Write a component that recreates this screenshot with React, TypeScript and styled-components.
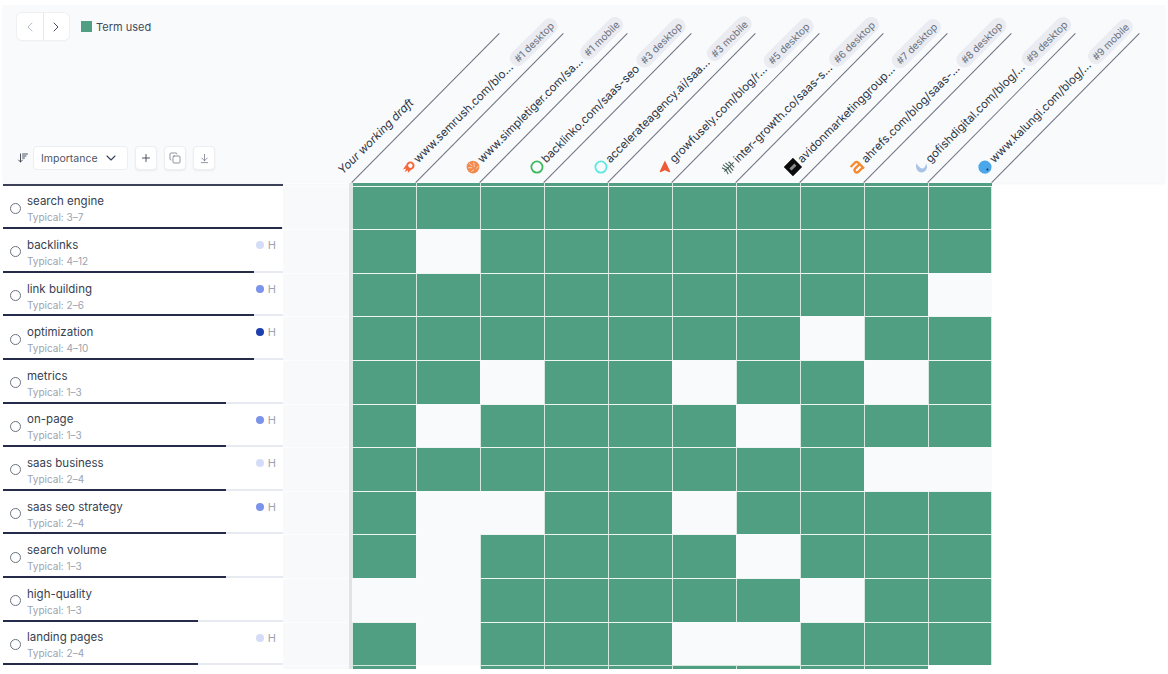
import { createGlobalStyle } from "styled-components";
import styled from "styled-components";
import { ArrowDownToLine, ArrowDownWideNarrow, ChevronDown, ChevronLeft, ChevronRight, Copy, Plus } from "lucide-react";

const GREEN = "#519f82";
const PANEL = "#f9fafc";

const GlobalStyle = createGlobalStyle`
    html, body {
        margin: 0;
        background: #fff;
        font-family: Inter, "Liberation Sans", sans-serif;
    }
`

const SemrushIcon = () => (
    <svg width="14" height="14" viewBox="0 0 14 14">
        <circle cx="9" cy="7" r="3.2" fill="none" stroke="#f4683c" strokeWidth="2" />
        <path d="M6 3.5 L1 4.5 L4 6 L0.5 7.5 L4 8.5 L2 10.5 L7 10.5 Z" fill="#f4683c" />
    </svg>
)

const TigerIcon = () => (
    <svg width="14" height="14" viewBox="0 0 14 14">
        <circle cx="7" cy="7" r="6.4" fill="#f28a50" />
        <path d="M7 1.5 V6 M3 4 L6 7 M11 4 L8 8 M2.5 9 L6 9.5 M11.5 10 L8 10.5" stroke="#fbd3b8" strokeWidth="0.9" fill="none" />
    </svg>
)

const RingIcon = ({ color }: { color: string }) => (
    <svg width="14" height="14" viewBox="0 0 14 14">
        <circle cx="7" cy="7" r="5.6" fill="none" stroke={color} strokeWidth="1.8" />
    </svg>
)

const ArrowIcon = () => (
    <svg width="14" height="14" viewBox="0 0 14 14">
        <path d="M13.5 7 L1 1 L3.8 7 L1 13 Z" fill="#ee5a36" transform="rotate(-45 7 7)" />
    </svg>
)

const LeafIcon = () => (
    <svg width="14" height="14" viewBox="0 0 14 14">
        <g fill="none" stroke="#47615c" strokeWidth="1.1">
            <path d="M0.5 7 H13.5" />
            <path d="M3 7 Q2 4.5 1.5 2.5 M5.5 7 Q4.5 4 4.5 1 M8 7 Q7.5 4 7.5 1.5 M10.5 7 Q10.5 5 10.5 3" />
            <path d="M3 7 Q2 9.5 1.5 11.5 M5.5 7 Q4.5 10 4.5 13 M8 7 Q7.5 10 7.5 12.5 M10.5 7 Q10.5 9 10.5 11" />
        </g>
    </svg>
)

const AvidonIcon = () => (
    <svg width="14" height="14" viewBox="0 0 14 14">
        <rect x="0.5" y="0.5" width="13" height="13" fill="#0b0b0b" />
        <rect x="3.5" y="5.5" width="7" height="3" fill="#8a8a8a" />
    </svg>
)

const AhrefsIcon = () => (
    <svg width="14" height="14" viewBox="0 0 14 14">
        <g fill="none" stroke="#f58a2e" strokeWidth="2.3">
            <path d="M2.5 2.5 H8.5 Q11 2.5 11 5 V13" />
            <path d="M11 6.8 H5.2 Q2.4 6.8 2.4 9.2 Q2.4 11.4 5.2 11.4 H11" />
        </g>
    </svg>
)

const FishIcon = () => (
    <svg width="14" height="14" viewBox="0 0 14 14">
        <path d="M6.5 1 Q2 4 2 8 Q3 13 8 12.8 Q12.5 12 13 8 Q10.5 10.5 7.5 9.5 Q5 8 6.5 1 Z" fill="#a9c3e6" />
    </svg>
)

const KalungiIcon = () => (
    <svg width="14" height="14" viewBox="0 0 14 14">
        <circle cx="7" cy="7" r="6.6" fill="#4aa8ea" />
        <circle cx="7" cy="10.5" r="1.1" fill="#1b3f78" />
    </svg>
)

interface Source {
    url: string;
    rank: string;
    icon: React.ReactNode;
}

const sources: Source[] = [
    { url: "www.semrush.com/blo...", rank: "#1 desktop", icon: <SemrushIcon /> },
    { url: "www.simpletiger.com/sa...", rank: "#1 mobile", icon: <TigerIcon /> },
    { url: "backlinko.com/saas-seo", rank: "#3 desktop", icon: <RingIcon color="#3dba5f" /> },
    { url: "accelerateagency.ai/saa...", rank: "#3 mobile", icon: <RingIcon color="#5ce8e4" /> },
    { url: "growfusely.com/blog/r...", rank: "#5 desktop", icon: <ArrowIcon /> },
    { url: "inter-growth.co/saas-s...", rank: "#6 desktop", icon: <LeafIcon /> },
    { url: "avidonmarketinggroup...", rank: "#7 desktop", icon: <AvidonIcon /> },
    { url: "ahrefs.com/blog/saas-...", rank: "#8 desktop", icon: <AhrefsIcon /> },
    { url: "gofishdigital.com/blog/...", rank: "#9 desktop", icon: <FishIcon /> },
    { url: "www.kalungi.com/blog/...", rank: "#9 mobile", icon: <KalungiIcon /> },
]

type Level = "low" | "mid" | "high";

interface Term {
    name: string;
    typical: string;
    level?: Level;
    meter: number;
    missing: number[];
}

// missing = the columns (1-10) where the term is not used
const terms: Term[] = [
    { name: "search engine", typical: "3–7", meter: 279, missing: [] },
    { name: "backlinks", typical: "4–12", level: "low", meter: 251, missing: [2] },
    { name: "link building", typical: "2–6", level: "mid", meter: 251, missing: [10] },
    { name: "optimization", typical: "4–10", level: "high", meter: 251, missing: [8] },
    { name: "metrics", typical: "1–3", meter: 223, missing: [3, 6, 9] },
    { name: "on-page", typical: "1–3", level: "mid", meter: 223, missing: [2, 7] },
    { name: "saas business", typical: "2–4", level: "low", meter: 223, missing: [9, 10] },
    { name: "saas seo strategy", typical: "2–4", level: "mid", meter: 223, missing: [2, 3, 6] },
    { name: "search volume", typical: "1–3", meter: 223, missing: [2, 7] },
    { name: "high-quality", typical: "1–3", meter: 195, missing: [1, 2, 8] },
    { name: "landing pages", typical: "2–4", level: "low", meter: 195, missing: [2, 6, 7] },
]

const columns = [1, 2, 3, 4, 5, 6, 7, 8, 9, 10];

const App = () => {
    return (
        <Page>
            <GlobalStyle />
            <Header>
                <Tools>
                    <TopTools>
                        <Pager>
                            <PagerButton $muted><ChevronLeft size={16} strokeWidth={1.4} /></PagerButton>
                            <PagerButton><ChevronRight size={16} strokeWidth={1.4} /></PagerButton>
                        </Pager>
                        <Legend>
                            <LegendSwatch />
                            Term used
                        </Legend>
                    </TopTools>
                    <BottomTools>
                        <ArrowDownWideNarrow size={12} color="#374151" strokeWidth={1.8} />
                        <SortSelect>
                            Importance
                            <ChevronDown size={16} color="#374151" strokeWidth={1.6} />
                        </SortSelect>
                        <ToolButton><Plus size={12} color="#374151" strokeWidth={1.8} /></ToolButton>
                        <ToolButton><Copy size={12} color="#6b7280" strokeWidth={1.5} /></ToolButton>
                        <ToolButton><ArrowDownToLine size={11} color="#6b7280" strokeWidth={1.6} /></ToolButton>
                    </BottomTools>
                </Tools>
                <HeadColumn>
                    <HeadLine />
                    <HeadLabel>
                        <DraftTitle>Your working draft</DraftTitle>
                    </HeadLabel>
                </HeadColumn>
                {sources.map((source) => (
                    <HeadColumn key={source.url}>
                        <HeadLine />
                        <HeadLabel>
                            <IconSlot>{source.icon}</IconSlot>
                            <SourceUrl>{source.url}</SourceUrl>
                            <RankPill>{source.rank}</RankPill>
                        </HeadLabel>
                    </HeadColumn>
                ))}
            </Header>

            <SliverRow $height={2.6}>
                <TopRule />
                <DraftCell />
                <Divider />
                {columns.map((col) => <SliverCell key={col} $used />)}
            </SliverRow>

            {terms.map((term) => (
                <Row key={term.name}>
                    <TermCell>
                        <TermBody>
                            <Radio />
                            <TermText>
                                <TermName>{term.name}</TermName>
                                <TermTypical>Typical: {term.typical}</TermTypical>
                            </TermText>
                            {term.level && (
                                <Heading>
                                    <HeadingDot $level={term.level} />
                                    H
                                </Heading>
                            )}
                        </TermBody>
                        <MeterTrack>
                            <MeterFill style={{ width: term.meter }} />
                        </MeterTrack>
                    </TermCell>
                    <DraftCell />
                    <Divider />
                    {columns.map((col) => (
                        <Cell key={col} $used={!term.missing.includes(col)} />
                    ))}
                </Row>
            ))}

            <SliverRow $height={3.4}>
                <span />
                <DraftCell />
                <Divider />
                {columns.map((col) => <SliverCell key={col} $used={col !== 2 && col !== 10} $ruled />)}
            </SliverRow>
        </Page>
    )
}

const Page = styled.div`
    height: 674px;
    padding: 5px 3px 0;
    box-sizing: border-box;
    overflow: hidden;
`

const Header = styled.div`
    display: flex;
    height: 178px;
    background: ${PANEL};
    box-shadow: 0 1px 2px rgba(30, 40, 60, 0.05);
`

const Tools = styled.div`
    width: 285px;
    flex-shrink: 0;
    box-sizing: border-box;
    padding: 8px 0 13px 14px;
    display: flex;
    flex-direction: column;
    justify-content: space-between;
`

const TopTools = styled.div`
    display: flex;
    align-items: center;
    gap: 12px;
`

const Pager = styled.div`
    display: flex;
    width: 52px;
    height: 27px;
    border-radius: 5px;
    background: #fff;
    box-shadow: 0 0 0 1px #eef0f3, 0 1px 2px rgba(30, 40, 60, 0.06);
`

const PagerButton = styled.div<{ $muted?: boolean }>`
    flex: 1;
    display: flex;
    align-items: center;
    justify-content: center;
    color: ${(p) => (p.$muted ? "#b4b9c2" : "#374151")};
    border-right: ${(p) => (p.$muted ? "1px solid #e7e9ed" : "none")};
`

const Legend = styled.div`
    display: flex;
    align-items: center;
    gap: 4px;
    font-size: 11px;
    color: #3f4a5a;
`

const LegendSwatch = styled.span`
    width: 11px;
    height: 11px;
    background: ${GREEN};
`

const BottomTools = styled.div`
    display: flex;
    align-items: center;
`

const SortSelect = styled.div`
    width: 95px;
    height: 24px;
    margin-left: 4px;
    margin-right: 7px;
    box-sizing: border-box;
    padding: 0 8px 0 7px;
    display: flex;
    align-items: center;
    justify-content: space-between;
    font-size: 10.5px;
    color: #4b5563;
    background: #fff;
    border: 1px solid #eceef2;
    border-radius: 4px;
`

const ToolButton = styled.div`
    width: 22px;
    height: 24px;
    margin-right: 7px;
    display: flex;
    align-items: center;
    justify-content: center;
    background: #fff;
    border: 1px solid #eceef2;
    box-sizing: border-box;
    border-radius: 4px;
    box-shadow: 0 1px 2px rgba(30, 40, 60, 0.07);
`

const HeadColumn = styled.div`
    width: 64px;
    flex-shrink: 0;
    position: relative;
`

const HeadLine = styled.div`
    position: absolute;
    left: 64px;
    bottom: 0;
    width: 210px;
    height: 1px;
    background: #6b7280;
    transform-origin: left bottom;
    transform: rotate(-45.3deg);
`

const HeadLabel = styled.div`
    position: absolute;
    left: 52px;
    bottom: 3px;
    width: 210px;
    height: 16px;
    display: flex;
    align-items: center;
    gap: 2px;
    transform-origin: left center;
    transform: rotate(-45deg);
`

const IconSlot = styled.span`
    width: 14px;
    height: 14px;
    flex-shrink: 0;
    display: flex;
    align-items: center;
    justify-content: center;
`

const SourceUrl = styled.span`
    font-size: 11.5px;
    color: #2b3442;
    white-space: nowrap;
`

const DraftTitle = styled(SourceUrl)`
    font-style: italic;
`

const RankPill = styled.span`
    margin-left: auto;
    padding: 0 5px;
    height: 16px;
    line-height: 16px;
    font-size: 10px;
    color: #6b7280;
    white-space: nowrap;
    background: #eaecf2;
    border-radius: 8px;
`

const Row = styled.div`
    display: grid;
    grid-template-columns: 280px 66px 3px repeat(10, 64px);
    height: 43.6px;
`

const SliverRow = styled(Row)<{ $height: number }>`
    height: ${(p) => p.$height}px;
`

const TopRule = styled.div`
    border-bottom: 2px solid #3c4158;
`

const TermCell = styled.div`
    display: flex;
    flex-direction: column;
    background: #fff;
`

const TermBody = styled.div`
    flex: 1;
    display: flex;
    align-items: center;
    padding: 6px 7px 0 7px;
`

const Radio = styled.span`
    width: 11px;
    height: 11px;
    box-sizing: border-box;
    border: 1px solid #6b7280;
    border-radius: 50%;
    margin-right: 6px;
    margin-bottom: 2px;
    flex-shrink: 0;
`

const TermText = styled.div`
    flex: 1;
    display: flex;
    flex-direction: column;
    gap: 2px;
`

const TermName = styled.span`
    font-size: 11.5px;
    line-height: 15px;
    color: #374151;
`

const TermTypical = styled.span`
    font-size: 10px;
    line-height: 13px;
    color: #9ca3af;
`

const Heading = styled.div`
    align-self: flex-start;
    margin-top: 3px;
    display: flex;
    align-items: center;
    gap: 4px;
    font-size: 11px;
    line-height: 14px;
    color: #9ca3af;
`

const dotColors: Record<Level, string> = {
    low: "#d5dcf8",
    mid: "#7b93ea",
    high: "#1e3fae",
}

const HeadingDot = styled.span<{ $level: Level }>`
    width: 8px;
    height: 8px;
    border-radius: 50%;
    background: ${(p) => dotColors[p.$level]};
`

const MeterTrack = styled.div`
    height: 2px;
    background: #e8eaf2;
`

const MeterFill = styled.div`
    height: 100%;
    background: #262b49;
`

const DraftCell = styled.div`
    background: #f8f9fb;
    border-top: 1px solid #fdfdfe;
    box-sizing: border-box;
`

const Divider = styled.div`
    background: #e0e3e8;
`

const Cell = styled.div<{ $used: boolean }>`
    box-sizing: border-box;
    background: ${(p) => (p.$used ? GREEN : PANEL)};
    border-top: 1px solid ${(p) => (p.$used ? "#eef5f2" : "#fafbfd")};
    border-left: 1px solid ${(p) => (p.$used ? "#d5e8e0" : "#fafbfd")};

    &:last-child {
        border-right: 1px solid ${(p) => (p.$used ? "#d5e8e0" : "#fafbfd")};
    }
`

const SliverCell = styled.div<{ $used: boolean; $ruled?: boolean }>`
    box-sizing: border-box;
    background: ${(p) => (p.$used ? GREEN : "#fff")};
    border-left: 1px solid ${(p) => (p.$used ? "#d5e8e0" : "#fff")};
    border-top: ${(p) => (p.$ruled && p.$used ? "1px solid #d5e8e0" : "none")};
`

export default App;
